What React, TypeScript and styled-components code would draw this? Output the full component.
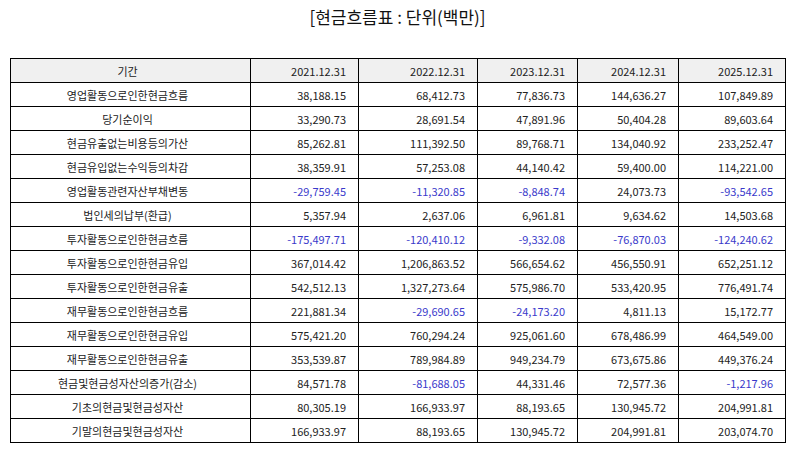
import React from "react";
import styled, { createGlobalStyle } from "styled-components";

const Global = createGlobalStyle`
  html, body { margin: 0; padding: 0; background: #fff; }
  body { font-family: "Noto Sans CJK KR", "Noto Sans", sans-serif; color: #222; }
`;

const Page = styled.div`
  width: 794px;
  height: 452px;
  padding: 0 9px 0 10px;
  box-sizing: border-box;
  display: flex;
  flex-direction: column;
`;

const Title = styled.h1`
  margin: 0;
  height: 58px;
  padding-top: 5px;
  box-sizing: border-box;
  text-align: center;
  font-size: 17px;
  font-weight: 400;
  color: #111;
  line-height: 24px;
`;

const Table = styled.table`
  border-collapse: collapse;
  table-layout: fixed;
  width: 775px;
  font-size: 11px;
  border: 1px solid #000;
`;

const Row = styled.tr`
  height: 24px;
`;

const Cell = styled.td<{ $head?: boolean; $label?: boolean; $neg?: boolean }>`
  border: 1px solid #000;
  padding: 0 12px 0 6px;
  text-align: ${(p) => (p.$label ? "center" : "right")};
  background: ${(p) => (p.$head ? "#f0f0f0" : "#fff")};
  color: ${(p) => (p.$neg ? "#3a3acb" : "#222")};
  font-weight: 400;
  white-space: nowrap;
  line-height: 14px;
  vertical-align: middle;
`;

const widths = [240, 108, 119, 100, 101, 107];
const headers = ["기간", "2021.12.31", "2022.12.31", "2023.12.31", "2024.12.31", "2025.12.31"];

const rows: [string, string[]][] = [
  ["영업활동으로인한현금흐름", ["38,188.15", "68,412.73", "77,836.73", "144,636.27", "107,849.89"]],
  ["당기순이익", ["33,290.73", "28,691.54", "47,891.96", "50,404.28", "89,603.64"]],
  ["현금유출없는비용등의가산", ["85,262.81", "111,392.50", "89,768.71", "134,040.92", "233,252.47"]],
  ["현금유입없는수익등의차감", ["38,359.91", "57,253.08", "44,140.42", "59,400.00", "114,221.00"]],
  ["영업활동관련자산부채변동", ["-29,759.45", "-11,320.85", "-8,848.74", "24,073.73", "-93,542.65"]],
  ["법인세의납부(환급)", ["5,357.94", "2,637.06", "6,961.81", "9,634.62", "14,503.68"]],
  ["투자활동으로인한현금흐름", ["-175,497.71", "-120,410.12", "-9,332.08", "-76,870.03", "-124,240.62"]],
  ["투자활동으로인한현금유입", ["367,014.42", "1,206,863.52", "566,654.62", "456,550.91", "652,251.12"]],
  ["투자활동으로인한현금유출", ["542,512.13", "1,327,273.64", "575,986.70", "533,420.95", "776,491.74"]],
  ["재무활동으로인한현금흐름", ["221,881.34", "-29,690.65", "-24,173.20", "4,811.13", "15,172.77"]],
  ["재무활동으로인한현금유입", ["575,421.20", "760,294.24", "925,061.60", "678,486.99", "464,549.00"]],
  ["재무활동으로인한현금유출", ["353,539.87", "789,984.89", "949,234.79", "673,675.86", "449,376.24"]],
  ["현금및현금성자산의증가(감소)", ["84,571.78", "-81,688.05", "44,331.46", "72,577.36", "-1,217.96"]],
  ["기초의현금및현금성자산", ["80,305.19", "166,933.97", "88,193.65", "130,945.72", "204,991.81"]],
  ["기말의현금및현금성자산", ["166,933.97", "88,193.65", "130,945.72", "204,991.81", "203,074.70"]],
];

export default function App() {
  return (
    <>
      <Global />
      <Page>
        <Title>[현금흐름표 : 단위(백만)]</Title>
        <Table>
          <colgroup>
            {widths.map((w, i) => (
              <col key={i} style={{ width: w }} />
            ))}
          </colgroup>
          <thead>
            <Row>
              {headers.map((h, i) => (
                <Cell as="th" key={h} $head $label={i === 0}>
                  {h}
                </Cell>
              ))}
            </Row>
          </thead>
          <tbody>
            {rows.map(([label, vals]) => (
              <Row key={label}>
                <Cell $label>{label}</Cell>
                {vals.map((v, i) => (
                  <Cell key={i} $neg={v.startsWith("-")}>
                    {v}
                  </Cell>
                ))}
              </Row>
            ))}
          </tbody>
        </Table>
      </Page>
    </>
  );
}
